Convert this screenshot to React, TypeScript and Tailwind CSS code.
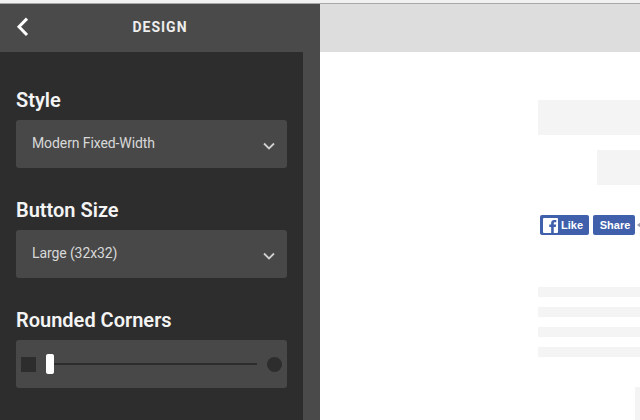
import React from "react";

function Chevron() {
  return (
    <svg width="12" height="8" viewBox="0 0 12 8" fill="none" className="mt-[3px]">
      <path d="M1 1.5 L6 6.4 L11 1.5" stroke="#d0d0d0" strokeWidth="1.8" />
    </svg>
  );
}

function Select({ label }: { label: string }) {
  return (
    <div className="h-12 rounded-[3px] bg-[#484848] flex items-center justify-between pl-4 pr-3">
      <span className="text-[14px] leading-[20px] tracking-[-0.1px] text-[#d8d8d8] -mt-[2px]">{label}</span>
      <Chevron />
    </div>
  );
}

function Heading({ children }: { children: React.ReactNode }) {
  return <div className="text-[20px] leading-[24px] font-semibold text-[#f4f4f4] mb-2">{children}</div>;
}

export default function App() {
  return (
    <div className="w-[640px] h-[420px] overflow-hidden flex flex-col bg-white font-['Roboto',sans-serif]">
      <div className="h-[3px] bg-[#f1f1f1] shrink-0" />
      <div className="h-px bg-[#a8a8a8] shrink-0" />
      <div className="flex flex-1 min-h-0">
        <aside className="w-80 shrink-0 flex flex-col bg-[#4a4a4a]">
          <header className="relative h-12 shrink-0 flex items-center justify-center">
            <svg width="14" height="20" viewBox="0 0 14 20" fill="none" className="absolute left-[15px] top-[13px]">
              <path d="M12 1.6 L4 9.8 L12 18" stroke="#ffffff" strokeWidth="3" />
            </svg>
            <span className="text-[14px] font-bold tracking-[0.07em] text-[#eeeeee] -mt-[1px]">DESIGN</span>
          </header>
          <div className="w-[303px] flex-1 bg-[#2d2d2d] px-4 pt-9">
            <Heading>Style</Heading>
            <Select label="Modern Fixed-Width" />
            <div className="h-[30px]" />
            <Heading>Button Size</Heading>
            <Select label="Large (32x32)" />
            <div className="h-[30px]" />
            <Heading>Rounded Corners</Heading>
            <div className="h-12 rounded-[3px] bg-[#484848] flex items-center pl-[5px] pr-[5px]">
              <div className="w-[15px] h-[15px] bg-[#2d2d2d] shrink-0" />
              <div className="w-2 h-5 rounded-[2px] bg-white ml-[10px] shrink-0 z-10" />
              <div className="h-[2px] w-[203px] bg-[#2d2d2d] shrink-0 -mt-[1px]" />
              <div className="w-[15px] h-[15px] rounded-full bg-[#2d2d2d] shrink-0 ml-[10px]" />
            </div>
          </div>
        </aside>
        <main className="flex-1 min-w-0 flex flex-col overflow-hidden">
          <div className="h-12 shrink-0 bg-[#dddddd]" />
          <div className="flex flex-col pt-12 pl-[218px]">
            <div className="h-[35px] w-[102px] bg-[#f4f4f4]" />
            <div className="h-[35px] w-[43px] bg-[#f4f4f4] mt-[15px] ml-[59px]" />
            <div className="flex items-center mt-[30px] ml-[2px] h-5 font-['Liberation_Sans',sans-serif] font-bold text-[11px] text-white">
              <div className="w-[49px] h-5 shrink-0 rounded-[2px] bg-[#4060ac] flex items-center pl-[3px] gap-[3px]">
                <div className="w-[15px] h-[15px] bg-white rounded-[1px] flex items-end justify-end overflow-hidden shrink-0">
                  <svg width="10" height="14" viewBox="0 0 10 15">
                    <path d="M3 15 V8.5 H1 V6 H3 V4.3 C3 2 4.3 1 6.2 1 H8.5 V3.4 H7 C6.1 3.4 5.8 3.8 5.8 4.6 V6 H8.4 L8 8.5 H5.8 V15 Z" fill="#4060ac" />
                  </svg>
                </div>
                <span>Like</span>
              </div>
              <div className="w-[42px] h-5 shrink-0 rounded-[2px] bg-[#4060ac] flex items-center justify-center ml-1 pl-[2px]">Share</div>
              <svg width="4" height="6" viewBox="0 0 4 6" className="ml-[2px] shrink-0">
                <path d="M0 3 L4 0 V6 Z" fill="#9aa0ad" />
              </svg>
            </div>
            <div className="flex flex-col gap-[10px] mt-[52px]">
              <div className="h-[10px] w-[102px] bg-[#f4f4f4]" />
              <div className="h-[10px] w-[102px] bg-[#f4f4f4]" />
              <div className="h-[10px] w-[102px] bg-[#f4f4f4]" />
              <div className="h-[10px] w-[102px] bg-[#f4f4f4]" />
            </div>
            <div className="h-[33px] w-[5px] bg-[#f4f4f4] mt-[30px] ml-[97px]" />
          </div>
        </main>
      </div>
    </div>
  );
}
